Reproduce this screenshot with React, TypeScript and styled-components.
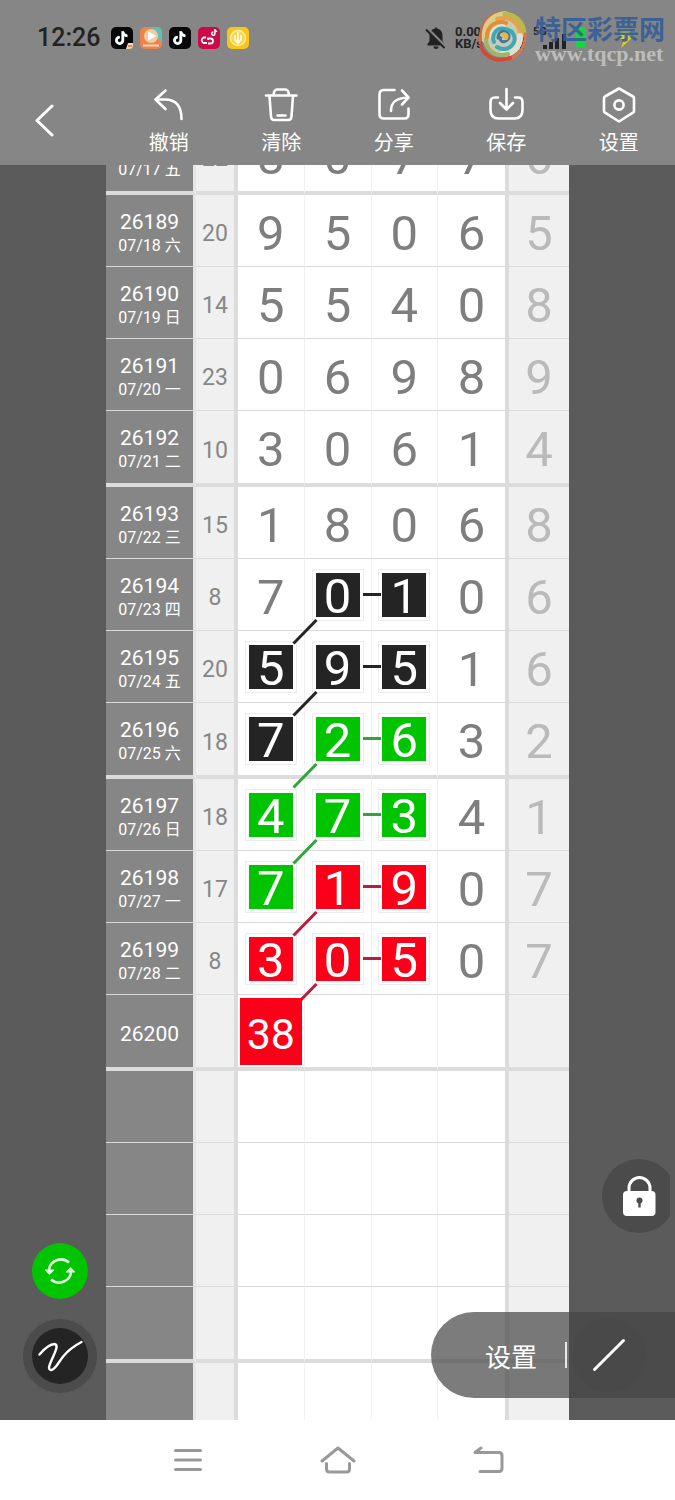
import React from "react";
import styled, { createGlobalStyle, css } from "styled-components";

const GlobalStyle = createGlobalStyle`
  *, *::before, *::after { box-sizing: border-box; }
  body {
    margin: 0;
    background: #5b5b5b;
    font-family: Roboto, "Noto Sans CJK SC", sans-serif;
  }
  button { border: 0; padding: 0; background: none; color: inherit; font: inherit; cursor: pointer; }
  svg { display: block; }
`;

const INK = { black: "#242424", green: "#00c400", red: "#fb0019" } as const;
const LINK = { black: "#242424", green: "#2fa53a", red: "#b81c3e" } as const;
type Tone = keyof typeof INK;

const Page = styled.div`
  display: flex;
  flex-direction: column;
  height: 100vh;
`;

const Header = styled.header`
  position: relative;
  flex: none;
  background: #868686;
  color: #fff;
`;

const StatusBar = styled.div`
  display: flex;
  align-items: center;
  height: 75px;
  padding: 0 38px 0 37px;
  color: #222;
`;

const Clock = styled.time`
  font-size: 25px;
  font-weight: 500;
  line-height: 32px;
`;

const AppIcons = styled.div`
  display: flex;
  gap: 7px;
  margin-left: 11px;
`;

const Indicators = styled.div`
  display: flex;
  align-items: center;
  gap: 8px;
  margin-left: auto;
`;

const NetSpeed = styled.div`
  font-size: 13px;
  font-weight: 700;
  line-height: 12px;
`;

const Watermark = styled.div`
  position: absolute;
  top: 9px;
  right: 10px;
  display: flex;
  align-items: center;
  gap: 6px;
`;

const SiteName = styled.div`
  padding-top: 4px;
  color: rgba(50, 92, 152, 0.88);
  font: 700 26px/30px "Noto Sans CJK SC", sans-serif;
`;

const SiteUrl = styled.div`
  color: #bdbdbd;
  font: 700 22px/22px "Liberation Serif", serif;
`;

const Toolbar = styled.nav`
  display: grid;
  grid-template-columns: repeat(6, 1fr);
  height: 90px;
`;

const BackButton = styled.button`
  display: flex;
  align-items: center;
  padding-left: 32px;
`;

const ToolButton = styled.button`
  display: flex;
  flex-direction: column;
  align-items: center;
  gap: 4px;
  padding-top: 10px;
  font-size: 20px;
  line-height: 28px;
`;

const Stage = styled.main`
  position: relative;
  flex: 1;
  min-height: 0;
  display: flex;
`;

const Scroller = styled.div`
  flex: 1;
  padding: 0 106px;
  overflow-y: auto;
  scrollbar-width: none;
`;

const Sheet = styled.table`
  width: 100%;
  margin-top: -46px;
  table-layout: fixed;
  border-collapse: separate;
  border-spacing: 0;
  background: #fff;
`;

const Col = styled.col<{ $w?: number }>`
  width: ${(p) => (p.$w ? `${p.$w}px` : "auto")};
`;

const Row = styled.tr<{ $last: boolean }>`
  height: ${(p) => (p.$last ? 76 : 72)}px;
  & > * {
    padding: 0;
    text-align: center;
    vertical-align: middle;
    border-bottom: ${(p) => (p.$last ? "4px solid #dcdcdc" : "1px solid #dadada")};
  }
  & > th, & > td:nth-of-type(1) {
    padding-top: 6px;
  }
`;

const IssueCell = styled.th`
  background: #868686;
  color: #fff;
  font-weight: 400;
  border-right: 3px solid #e6e6e6;
`;

const Issue = styled.div`
  font-size: 21px;
  line-height: 24px;
`;

const DrawDate = styled.div`
  font-size: 16px;
  line-height: 24px;
`;

const SumCell = styled.td`
  background: #f0f0f0;
  color: #868686;
  font-size: 23px;
  border-right: 4px solid #dcdcdc;
`;

const DigitCell = styled.td<{ $edge: boolean }>`
  position: relative;
  color: #7e7e7e;
  font-size: 49px;
  line-height: 56px;
  ${(p) => !p.$edge && css`border-right: 1px solid #f1f1f1;`}
`;

const TailCell = styled.td`
  background: #f0f0f0;
  color: #bababa;
  font-size: 49px;
  line-height: 56px;
  border-left: 4px solid #dcdcdc;
`;

const Digit = styled.div`
  padding-top: 6px;
`;

const Mark = styled.div<{ $tone: Tone }>`
  width: 44px;
  height: 44px;
  margin: 0 auto;
  padding-top: 2px;
  line-height: 44px;
  color: #fff;
  background: ${(p) => INK[p.$tone]};
  outline: 1px solid #ececec;
  outline-offset: 3px;
`;

const Pick = styled.div`
  position: relative;
  z-index: 2;
  display: flex;
  align-items: center;
  justify-content: center;
  height: 67px;
  margin: 2px;
  padding-top: 6px;
  font-size: 43px;
  color: #fff;
  background: ${INK.red};
`;

const Dash = styled.span<{ $tone: Tone }>`
  position: absolute;
  z-index: 1;
  top: 34px;
  left: -9px;
  width: 18px;
  height: 3px;
  background: ${(p) => LINK[p.$tone]};
`;

const Slash = styled.svg`
  position: absolute;
  z-index: 1;
  top: 60px;
  left: -13px;
`;

const RoundButton = styled.button<{ $size: number; $bg: string }>`
  display: flex;
  flex: none;
  align-items: center;
  justify-content: center;
  width: ${(p) => p.$size}px;
  height: ${(p) => p.$size}px;
  border-radius: 50%;
  background: ${(p) => p.$bg};
`;

const LeftTools = styled.div`
  position: absolute;
  left: 23px;
  bottom: 27px;
  display: flex;
  flex-direction: column;
  align-items: center;
  gap: 20px;
`;

const PenRing = styled.div`
  padding: 9px;
  border-radius: 50%;
  background: #4b4b4b;
`;

const LockDock = styled.div`
  position: absolute;
  right: 5px;
  bottom: 187px;
  width: 68px;
  overflow: hidden;
`;

const ModePill = styled.div`
  position: absolute;
  right: 0;
  bottom: 22px;
  display: flex;
  align-items: center;
  height: 86px;
  padding: 0 29px 0 54px;
  border-radius: 43px 0 0 43px;
  background: rgba(69, 69, 69, 0.7);
  color: #fff;
  font-size: 26px;
`;

const Divider = styled.span`
  width: 2px;
  height: 26px;
  margin: 0 5px 0 28px;
  background: #e8e8e8;
`;

const SystemNav = styled.nav`
  flex: none;
  display: grid;
  grid-template-columns: repeat(3, 1fr);
  height: 80px;
  padding: 0 calc(100% / 6);
  background: #fff;
`;

const NavButton = styled.button`
  display: flex;
  align-items: center;
  justify-content: center;
`;

/* ---------- icons ---------- */

const line = {
  fill: "none",
  stroke: "currentColor",
  strokeLinecap: "round",
  strokeLinejoin: "round",
} as const;

const ToolIcon = ({ children }: { children: React.ReactNode }) => (
  <svg width="40" height="40" viewBox="0 0 40 40" strokeWidth="2.6" {...line}>
    {children}
  </svg>
);

const tools = [
  {
    label: "撤销",
    icon: <path d="M16.5 5.5 6.5 14.5 16.5 24M7 14.5H16c10 0 16.500 6 16.500 19.500" />,
  },
  {
    label: "清除",
    icon: (
      <path d="M5 10.500H35.500M12.500 10C13 5.500 14 4.500 16 4.500h8.500C26.500 4.500 27.500 5.500 28 10M8.500 11 10 31.500c.2 2.500 1 3.500 3 3.500H27.500c2 0 2.800-1 3-3.500L32 11M16.500 30.500h8" />
    ),
  },
  {
    label: "分享",
    icon: (
      <path d="M20.500 5H10C6.500 5 5.500 6.500 5.500 9.500V29c0 3.500 1.500 4.500 4.500 4.500H30.500c3 0 4-1.500 4-4.500V23.500M17 26C17 17 22 13 34 12.500M28 5.500 34.500 12.500 28 19.500" />
    ),
  },
  {
    label: "保存",
    icon: (
      <path d="M20.500 4V24M14 18l6.500 6.500L27 18M12 12.500H9c-3 0-4.500 1.500-4.500 4.500v8c0 5.500 3 8.500 8 8.500H28.500c5 0 8-3 8-8.500V17c0-3-1.500-4.500-4.500-4.500H29" />
    ),
  },
  {
    label: "设置",
    icon: (
      <>
        <path d="M20 3.500 34 11.500a2 2 0 0 1 1 1.700V26a2 2 0 0 1-1 1.700L20 36.500 6 27.700A2 2 0 0 1 5 26V13.200a2 2 0 0 1 1-1.700Z" />
        <circle cx="20" cy="20" r="4.600" />
      </>
    ),
  },
];

const NotePath = ({ x = 0, y = 0, s = 1 }: { x?: number; y?: number; s?: number }) => (
  <g transform={`translate(${x} ${y}) scale(${s})`} fill="none" strokeWidth="2.400">
    <path d="M12 4.500v9a3.200 3.200 0 1 1-3.200-3.200M12 5c.5 2.500 2 3.800 4.500 4" stroke="#6fe3e3" transform="translate(-.5 -.4)" />
    <path d="M12 4.500v9a3.200 3.200 0 1 1-3.200-3.200M12 5c.5 2.500 2 3.800 4.500 4" stroke="#fff" />
  </g>
);

const AppTile = ({ fill, children }: { fill: string; children: React.ReactNode }) => (
  <svg width="22" height="22" viewBox="0 0 22 22">
    <rect width="22" height="22" rx="5" fill={fill} />
    {children}
  </svg>
);

const Bell = () => (
  <svg width="22" height="24" viewBox="0 0 22 24">
    <path d="M11 1.500c.8 0 1.400.5 1.500 1.300 3.200.7 5 3.200 5 6.700v5.500l2 3v1.500H2.500V18l2-3V9.500c0-3.500 1.800-6 5-6.700.1-.8.700-1.300 1.500-1.300ZM8.500 20.500h5a2.500 2.500 0 0 1-5 0Z" fill="#222" />
    <path d="M2.500 2.500 21 21" stroke="#868686" strokeWidth="2.500" />
    <path d="M1 3.500 19.500 22" stroke="#222" strokeWidth="2" />
  </svg>
);

const Signal = () => (
  <svg width="34" height="24" viewBox="0 0 34 24" fill="#222">
    <text x="0" y="9" fontSize="11" fontWeight="700">5G</text>
    <rect x="10" y="19" width="4" height="4" />
    <rect x="16" y="16" width="4" height="7" />
    <rect x="22" y="12" width="4" height="11" />
    <rect x="29" y="8" width="4" height="15" />
  </svg>
);

const SwirlLogo = () => (
  <svg width="52" height="54" viewBox="0 0 52 54" fill="none" strokeLinecap="round">
    <circle cx="26" cy="27" r="20" fill="#c9c9b4" />
    <path d="M3 33C2 14 12 3 26 3" stroke="#c9694f" strokeWidth="3" />
    <path d="M8 30C6 15 15 5 28 4" stroke="#d8ce86" strokeWidth="6" />
    <path d="M28 4c12 1 19 10 19 21" stroke="#bdb84c" strokeWidth="5" />
    <path d="M20 9c13-4 22 4 23 15" stroke="#e3a44c" strokeWidth="4" />
    <path d="M48 24c1 14-8 25-21 26" stroke="#d9744c" strokeWidth="3" />
    <path d="M43 26c0 12-8 18-18 18" stroke="#e2dfcf" strokeWidth="6" />
    <path d="M33 48C18 53 7 46 4 36" stroke="#cf4a3a" strokeWidth="4" />
    <path d="M31 44C18 48 9 40 9 29" stroke="#9db56a" strokeWidth="4" />
    <path d="M10 27C10 15 20 10 29 13" stroke="#e78b35" strokeWidth="4" />
    <path d="M14 27c0-8 6-12 13-11" stroke="#e4e0d0" strokeWidth="3" />
    <path d="M17 32c-3-8 3-15 11-13 8 1 11 8 9 13-3 7-11 9-17 5" stroke="#3da9b5" strokeWidth="4" />
    <path d="M21 28c0-5 4-8 8-6s4 7 0 9-7-1-5-4" stroke="#3b79a8" strokeWidth="3" />
    <path d="M25 25c3-2 6 1 4 3" stroke="#e9b93c" strokeWidth="4" />
  </svg>
);

/* ---------- data ---------- */

interface Draw {
  issue: string;
  date?: string;
  sum?: number;
  digits?: string;
  tail?: string;
  marks?: (Tone | null)[];
  pick?: string;
}

const draws: Draw[] = [
  { issue: "26188", date: "07/17 五", sum: 22, digits: "8077", tail: "6" },
  { issue: "26189", date: "07/18 六", sum: 20, digits: "9506", tail: "5" },
  { issue: "26190", date: "07/19 日", sum: 14, digits: "5540", tail: "8" },
  { issue: "26191", date: "07/20 一", sum: 23, digits: "0698", tail: "9" },
  { issue: "26192", date: "07/21 二", sum: 10, digits: "3061", tail: "4" },
  { issue: "26193", date: "07/22 三", sum: 15, digits: "1806", tail: "8" },
  { issue: "26194", date: "07/23 四", sum: 8, digits: "7010", tail: "6", marks: [null, "black", "black"] },
  { issue: "26195", date: "07/24 五", sum: 20, digits: "5951", tail: "6", marks: ["black", "black", "black"] },
  { issue: "26196", date: "07/25 六", sum: 18, digits: "7263", tail: "2", marks: ["black", "green", "green"] },
  { issue: "26197", date: "07/26 日", sum: 18, digits: "4734", tail: "1", marks: ["green", "green", "green"] },
  { issue: "26198", date: "07/27 一", sum: 17, digits: "7190", tail: "7", marks: ["green", "red", "red"] },
  { issue: "26199", date: "07/28 二", sum: 8, digits: "3050", tail: "7", marks: ["red", "red", "red"] },
  { issue: "26200", pick: "38" },
  { issue: "" },
  { issue: "" },
  { issue: "" },
  { issue: "" },
  { issue: "" },
];

const DrawRow = ({ draw, index }: { draw: Draw; index: number }) => (
  <Row $last={index % 4 === 0}>
    <IssueCell scope="row">
      <Issue>{draw.issue}</Issue>
      {draw.date && <DrawDate>{draw.date}</DrawDate>}
    </IssueCell>
    <SumCell>{draw.sum}</SumCell>
    {[0, 1, 2, 3].map((i) => {
      const tone = draw.marks?.[i];
      const value = draw.digits?.[i];
      return (
        <DigitCell key={i} $edge={i === 3}>
          {tone ? <Mark $tone={tone}>{value}</Mark> : value && <Digit>{value}</Digit>}
          {i === 0 && draw.pick && <Pick>{draw.pick}</Pick>}
          {tone && i === 2 && <Dash $tone={tone} />}
          {tone && i === 1 && (
            <Slash width="26" height="26" viewBox="0 0 26 26">
              <path d="M24.500 1 1.500 24.500" stroke={LINK[tone]} strokeWidth="3" />
            </Slash>
          )}
        </DigitCell>
      );
    })}
    <TailCell>{draw.tail && <Digit>{draw.tail}</Digit>}</TailCell>
  </Row>
);

export default function App() {
  return (
    <Page>
      <GlobalStyle />
      <Header>
        <StatusBar>
          <Clock>12:26</Clock>
          <AppIcons>
            <AppTile fill="#080808">
              <NotePath />
              <path d="M15 22l2-6h5v2a4 4 0 0 1-4 4Z" fill="#f3d9b8" />
              <path d="M17 19h4" stroke="#e8702a" strokeWidth="1.500" />
            </AppTile>
            <AppTile fill="#f0824a">
              <path d="M11 0h6a5 5 0 0 1 5 5v9C18 14 12 8 11 0Z" fill="#5cc3ae" />
              <circle cx="11" cy="9" r="7" fill="#f6c9a0" />
              <path d="M8.500 5v8l7-4Z" fill="#fff" stroke="#fff" strokeLinejoin="round" />
              <path d="M3 18.500h16" stroke="#ffd9bd" strokeWidth="2" />
            </AppTile>
            <AppTile fill="#080808">
              <NotePath />
            </AppTile>
            <AppTile fill="#cc0a48">
              <NotePath x={11} y={0} s={0.5} />
              <path d="M8 10.500H5.500a3 3 0 0 0 0 5.500H9M10 13v-1.500h2.500a2.500 2.500 0 0 1 0 5H10" stroke="#fff" strokeWidth="1.800" fill="none" />
            </AppTile>
            <AppTile fill="#f8c51c">
              <circle cx="11" cy="11" r="7.500" fill="#fbd64a" stroke="#fff0a8" strokeWidth="1.500" />
              <path d="M11 5v10M8 8v5l3 3 3-3V8" stroke="#fffbe0" strokeWidth="1.800" fill="none" />
            </AppTile>
          </AppIcons>
          <Indicators>
            <Bell />
            <NetSpeed>
              0.00
              <br />
              KB/s
            </NetSpeed>
            <Signal />
            <Signal />
            <svg width="62" height="24" viewBox="0 0 62 24">
              <rect x="1" y="1" width="10" height="21" rx="3" fill="#17d63c" />
              <path d="M46 3h10l-3 7h6L46 22l3-9h-5Z" fill="#d8cf2e" />
            </svg>
          </Indicators>
        </StatusBar>
        <Watermark>
          <SwirlLogo />
          <div>
            <SiteName>特区彩票网</SiteName>
            <SiteUrl>www.tqcp.net</SiteUrl>
          </div>
        </Watermark>
        <Toolbar>
          <BackButton aria-label="返回">
            <svg width="26" height="34" viewBox="0 0 26 34" strokeWidth="3" {...line}>
              <path d="M20 3 5 17.500 20 32" />
            </svg>
          </BackButton>
          {tools.map((t) => (
            <ToolButton key={t.label}>
              <ToolIcon>{t.icon}</ToolIcon>
              {t.label}
            </ToolButton>
          ))}
        </Toolbar>
      </Header>

      <Stage>
        <Scroller>
          <Sheet>
            <colgroup>
              <Col $w={90} />
              <Col $w={42} />
              <Col />
              <Col />
              <Col />
              <Col />
              <Col $w={64} />
            </colgroup>
            <tbody>
              {draws.map((d, i) => (
                <DrawRow key={i} draw={d} index={i} />
              ))}
            </tbody>
          </Sheet>
        </Scroller>

        <LeftTools>
          <RoundButton $size={56} $bg={INK.green} aria-label="切换">
            <svg width="32" height="30" viewBox="0 0 32 30" fill="none" stroke="#e4ffe0" strokeWidth="2.600">
              <path d="M25 6.500A12 11.500 0 0 0 5 14M7 23.500A12 11.500 0 0 0 27 16" />
              <path d="M1.500 14h8L5.500 18ZM22.500 16h8L26.500 12Z" fill="#e4ffe0" strokeWidth="1.200" strokeLinejoin="round" />
            </svg>
          </RoundButton>
          <PenRing>
            <RoundButton $size={56} $bg="#242424" aria-label="画笔">
              <svg width="46" height="34" viewBox="0 0 46 34" color="#fff" strokeWidth="2.400" {...line}>
                <path d="M2.500 15.500C8 9 13 5 17.500 5C22 6 18 13 15.500 19C13 25 10 30.500 14 31C18 31.500 22 22 27 16.500C32 10.500 38 6.500 44.500 3" />
              </svg>
            </RoundButton>
          </PenRing>
        </LeftTools>

        <LockDock>
          <RoundButton $size={74} $bg="#4b4b4b" aria-label="锁定">
            <svg width="34" height="42" viewBox="0 0 34 42">
              <path d="M7 18V13a10.500 10.500 0 0 1 21 0v5" fill="none" stroke="#fff" strokeWidth="3" />
              <rect x="1" y="16" width="32.500" height="25" rx="4" fill="#fff" />
              <circle cx="17.500" cy="25.500" r="3" fill="#4b4b4b" />
              <path d="M17.500 26v6.500" stroke="#4b4b4b" strokeWidth="2.400" />
            </svg>
          </RoundButton>
        </LockDock>

        <ModePill>
          <button>设置</button>
          <Divider />
          <RoundButton $size={74} $bg="rgba(69, 69, 69, 0.12)" aria-label="直线">
            <svg width="34" height="34" viewBox="0 0 34 34" color="#fff" strokeWidth="3" {...line}>
              <path d="M2.500 31.500 31.500 2.500" />
            </svg>
          </RoundButton>
        </ModePill>
      </Stage>

      <SystemNav>
        <NavButton aria-label="最近任务">
          <svg width="30" height="26" viewBox="0 0 30 26" color="#999" strokeWidth="3" {...line}>
            <path d="M2.500 3.500h25M2.500 13h25M2.500 22.500h25" />
          </svg>
        </NavButton>
        <NavButton aria-label="主屏幕">
          <svg width="36" height="30" viewBox="0 0 36 30" color="#999" strokeWidth="3" {...line}>
            <path d="M2 16 18 3 34 16M6.500 18.500V24c0 2 .8 3 3 3h17c2.200 0 3-1 3-3v-5.500" />
          </svg>
        </NavButton>
        <NavButton aria-label="返回上一页">
          <svg width="32" height="30" viewBox="0 0 32 30" color="#999" strokeWidth="3" {...line}>
            <path d="M9 3 3 7.500H27c2 0 3 1 3 3V23c0 2.500-1 3.500-3 3.500H8" />
          </svg>
        </NavButton>
      </SystemNav>
    </Page>
  );
}
